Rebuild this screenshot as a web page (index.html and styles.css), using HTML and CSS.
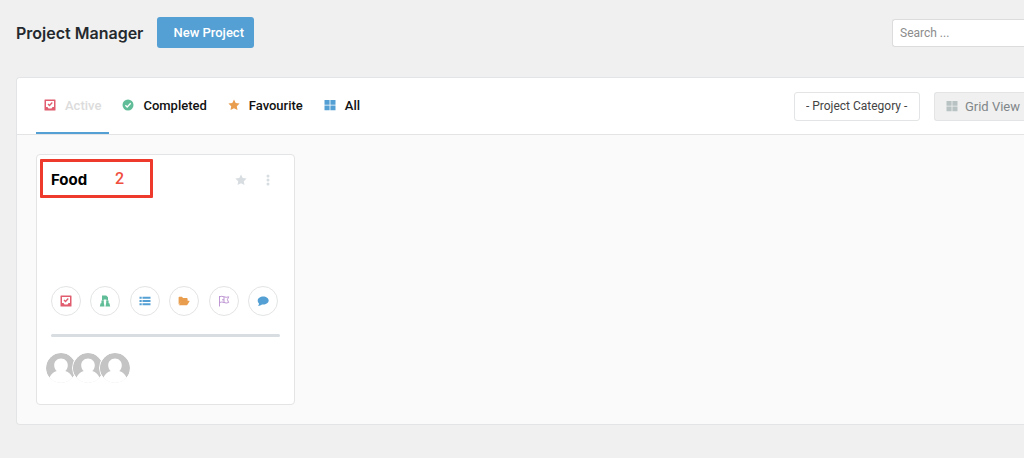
FILE: index.html
```html
<!DOCTYPE html>
<html lang="en">
<head>
    <meta charset="UTF-8">
    <meta name="viewport" content="width=device-width, initial-scale=1.0">
    <title>Project Manager</title>
    <link rel="stylesheet" href="styles.css">
</head>
<body>
    <!-- Shared icons -->
    <svg class="sprite" aria-hidden="true">
        <symbol id="icon-task" viewBox="0 0 12 12">
            <path fill-rule="evenodd" d="M1 .5h10a.5.5 0 0 1 .5.5v10a.5.5 0 0 1-.5.5H1a.5.5 0 0 1-.5-.5V1A.5.5 0 0 1 1 .5zM2 2v6h1.500l1 1.500h3l1-1.500H10V2z"/>
            <path d="M4 5l1.500 1.500L8.300 3.500" fill="none" stroke="currentColor" stroke-width="1.300"/>
        </symbol>
        <symbol id="icon-check" viewBox="0 0 12 12">
            <circle cx="6" cy="6" r="5.500"/>
            <path d="M3.400 6.200l1.800 1.800L8.700 4.300" fill="none" stroke="#fff" stroke-width="1.300"/>
        </symbol>
        <symbol id="icon-star" viewBox="0 0 12 12">
            <path d="M6 .4l1.700 3.500 3.900.6-2.800 2.700.7 3.900L6 9.300l-3.500 1.800.7-3.900L.4 4.500l3.900-.6z"/>
        </symbol>
        <symbol id="icon-grid" viewBox="0 0 12 12">
            <path d="M.5 1h5.100v4.700H.5zM6.400 1h5.100v4.700H6.400zM.5 6.500h5.100v4.700H.5zM6.400 6.500h5.100v4.700H6.400z"/>
        </symbol>
        <symbol id="icon-dots" viewBox="0 0 12 12">
            <circle cx="6" cy="2" r="1.500"/><circle cx="6" cy="6" r="1.500"/><circle cx="6" cy="10" r="1.500"/>
        </symbol>
        <symbol id="icon-discuss" viewBox="0 0 12 12">
            <path d="M3 .5h4.200L9 2.200v3.300H7.400V4.400H4.800v1.100H3z"/>
            <path d="M2.400 5.500h2.400v2.300l.7 3.700H.8l.8-3.200h.8zM7.200 5.500h2.400v2.800h.8l.8 3.200H6.500l.7-3.700z"/>
        </symbol>
        <symbol id="icon-list" viewBox="0 0 12 12">
            <path d="M.5 1.800h2.200v2H.5zM3.500 1.800h8v2h-8zM.5 5h2.200v2H.5zM3.500 5h8v2h-8zM.5 8.200h2.200v2H.5zM3.500 8.200h8v2h-8z"/>
        </symbol>
        <symbol id="icon-folder" viewBox="0 0 12 12">
            <path d="M.6 9.500V2.600q0-.8.800-.8h2.500l1.200 1.300h3.700q.8 0 .8.800v2.400H4.300z"/>
            <path d="M.9 10.300l2.300-4q.3-.5.900-.5h7q.6 0 .3.600l-2 3.300q-.4.600-1 .6z"/>
        </symbol>
        <symbol id="icon-flag" viewBox="0 0 12 12">
            <path d="M1.500 11.500V1M1.500 1.800q2.300-1 4.500 0t4.700 0L9.400 4.700l1.300 2.800q-2.500 1-4.700 0t-4.500 0M6 1.800v3H4M6 4.800v2.700" fill="none" stroke="currentColor" stroke-width=".9"/>
        </symbol>
        <symbol id="icon-comment" viewBox="0 0 12 12">
            <path d="M6.200 1.500c3 0 5.500 1.700 5.500 4s-2.500 4-5.500 4l-1.200-.1C4 10.300 2.500 10.800 1 10.800c.7-.8 1-1.500 1-2.400C1 7.600.7 6.600.7 5.500c0-2.300 2.500-4 5.500-4z"/>
        </symbol>
        <symbol id="icon-avatar" viewBox="0 0 30 30">
            <circle cx="15" cy="15" r="15" fill="#c4c4c4"/>
            <path d="M8.200 12.200C8.200 8.300 11.300 5.500 15 5.500s6.800 2.800 6.800 6.700c0 2.500-1 4.500-2.500 5.900 3.500.9 6.400 3.600 7.700 7.900V30H3v-4c1.300-4.300 4.200-7 7.700-7.900-1.500-1.400-2.500-3.400-2.500-5.900z" fill="#fff"/>
        </symbol>
    </svg>

    <div class="page">
        <header class="page-header">
            <h1>Project Manager</h1>
            <button type="button" class="btn-primary">New Project</button>
            <input type="search" class="search" placeholder="Search ..." aria-label="Search projects">
        </header>

        <main class="panel">
            <div class="toolbar">
                <nav class="tabs">
                    <a href="#active" class="tab active"><svg class="icon red"><use href="#icon-task"/></svg>Active</a>
                    <a href="#completed" class="tab"><svg class="icon green"><use href="#icon-check"/></svg>Completed</a>
                    <a href="#favourite" class="tab"><svg class="icon orange"><use href="#icon-star"/></svg>Favourite</a>
                    <a href="#all" class="tab"><svg class="icon blue"><use href="#icon-grid"/></svg>All</a>
                </nav>
                <div class="filters">
                    <select class="category" aria-label="Project category">
                        <option>- Project Category -</option>
                    </select>
                    <button type="button" class="view-btn"><svg class="icon"><use href="#icon-grid"/></svg>Grid View</button>
                </div>
            </div>

            <div class="projects">
                <article class="card">
                    <div class="card-header">
                        <h2><a href="#food">Food</a></h2>
                        <div class="card-actions">
                            <button type="button" aria-label="Favourite"><svg class="icon"><use href="#icon-star"/></svg></button>
                            <button type="button" aria-label="More"><svg class="icon"><use href="#icon-dots"/></svg></button>
                        </div>
                        <div class="callout">2</div>
                    </div>
                    <div class="card-links">
                        <a href="#tasks" class="red" aria-label="Tasks"><svg class="icon"><use href="#icon-task"/></svg></a>
                        <a href="#discussions" class="green" aria-label="Discussions"><svg class="icon"><use href="#icon-discuss"/></svg></a>
                        <a href="#lists" class="blue" aria-label="Task lists"><svg class="icon"><use href="#icon-list"/></svg></a>
                        <a href="#files" class="orange" aria-label="Files"><svg class="icon"><use href="#icon-folder"/></svg></a>
                        <a href="#milestones" class="purple" aria-label="Milestones"><svg class="icon"><use href="#icon-flag"/></svg></a>
                        <a href="#comments" class="blue" aria-label="Comments"><svg class="icon"><use href="#icon-comment"/></svg></a>
                    </div>
                    <div class="progress"></div>
                    <div class="members">
                        <svg class="avatar"><use href="#icon-avatar"/></svg>
                        <svg class="avatar"><use href="#icon-avatar"/></svg>
                        <svg class="avatar"><use href="#icon-avatar"/></svg>
                    </div>
                </article>
            </div>
        </main>
    </div>
</body>
</html>
```
FILE: styles.css
```css
:root {
    --background: #f0f0f0;
    --border: #e3e4e5;
    --muted: #d7dde1;
    --red: #e05c6e;
    --green: #61bd98;
    --orange: #e99d4e;
    --blue: #549fd3;
    --purple: #b88ccf;
}

* {
    box-sizing: border-box;
}

body {
    margin: 0;
    background: var(--background);
    color: #111;
    font-family: Roboto, "Liberation Sans", sans-serif;
    font-size: 13px;
    overflow-x: hidden;
}

button,
input,
select {
    font: inherit;
}

a {
    color: inherit;
    text-decoration: none;
}

.sprite {
    position: absolute;
    width: 0;
    height: 0;
}

.icon {
    width: 12px;
    height: 12px;
    flex: none;
    fill: currentColor;
}

.red { color: var(--red); }
.green { color: var(--green); }
.orange { color: var(--orange); }
.blue { color: var(--blue); }
.purple { color: var(--purple); }

.page {
    padding: 17px 0 34px 16px;
}

.page-header {
    display: flex;
    align-items: center;
    margin-bottom: 29px;
}

h1,
h2 {
    font-family: Inter, "Liberation Sans", sans-serif;
}

h1 {
    margin: 0 14px 0 0;
    color: #24292e;
    font-size: 16px;
    font-weight: 600;
}

.btn-primary {
    height: 31px;
    padding: 0 10px 0 16px;
    border: 0;
    border-radius: 3px;
    background: var(--blue);
    color: #fff;
    font-weight: 500;
}

.search {
    width: 132px;
    height: 28px;
    margin-left: auto;
    padding: 0 7px;
    border: 1px solid #dcdcdc;
    border-right: 0;
    border-radius: 3px 0 0 3px;
    background: #fff;
    font-size: 12px;
}

.search::placeholder {
    color: #8c8c8c;
}

.panel {
    border: 1px solid var(--border);
    border-right: 0;
    border-radius: 4px 0 0 4px;
    background: #fafafa;
}

.toolbar {
    display: flex;
    justify-content: space-between;
    align-items: center;
    padding-left: 19px;
    border-bottom: 1px solid var(--border);
    border-radius: 4px 0 0 0;
    background: #fff;
}

.tabs {
    display: flex;
    gap: 5px;
}

.tab {
    display: flex;
    align-items: center;
    gap: 9px;
    height: 56px;
    padding: 0 8px;
    border-bottom: 2px solid transparent;
    font-weight: 500;
}

.tab.active {
    border-bottom-color: var(--blue);
    color: #dcdcdc;
}

.filters {
    display: flex;
    gap: 14px;
}

.category,
.view-btn {
    height: 29px;
    border: 1px solid var(--border);
    border-radius: 3px;
}

.category {
    padding: 0 11px;
    appearance: none;
    background: #fff;
    color: #444;
    font-size: 12px;
}

.view-btn {
    display: flex;
    align-items: center;
    gap: 7px;
    padding: 0 4px 0 11px;
    border-right: 0;
    border-radius: 3px 0 0 3px;
    background: var(--background);
    color: #7f8689;
}

.view-btn .icon {
    color: #b9c2c2;
}

.projects {
    padding: 19px;
}

.card {
    width: 259px;
    padding: 14px;
    border: 1px solid var(--border);
    border-radius: 4px;
    background: #fff;
}

.card-header {
    position: relative;
    display: flex;
    justify-content: space-between;
    min-height: 117px;
}

h2 {
    margin: 0;
    color: #000;
    font-size: 15px;
    font-weight: 700;
    line-height: 22px;
}

.card-actions {
    display: flex;
    gap: 15px;
    height: 22px;
    margin-right: 6px;
}

.card-actions button {
    display: flex;
    align-items: center;
    padding: 0;
    border: 0;
    background: none;
    color: var(--muted);
}

/* Numbered highlight around the project name */
.callout {
    position: absolute;
    top: -10px;
    left: -11px;
    width: 113px;
    height: 39px;
    padding-left: 72px;
    border: 3px solid #ee3a2c;
    border-radius: 1px;
    color: #f04e3e;
    font-size: 16px;
    font-weight: 500;
    line-height: 33px;
    pointer-events: none;
}

.card-links {
    display: flex;
    justify-content: space-between;
    padding-right: 2px;
}

.card-links a {
    display: flex;
    align-items: center;
    justify-content: center;
    width: 30px;
    height: 30px;
    border: 1px solid var(--border);
    border-radius: 50%;
}

.progress {
    height: 3px;
    margin-top: 18px;
    border-radius: 2px;
    background: var(--muted);
}

.members {
    display: flex;
    margin: 15px 0 6px -6px;
}

.avatar {
    width: 32px;
    height: 32px;
    margin-right: -5px;
    border: 1px solid #fff;
    border-radius: 50%;
}
```
